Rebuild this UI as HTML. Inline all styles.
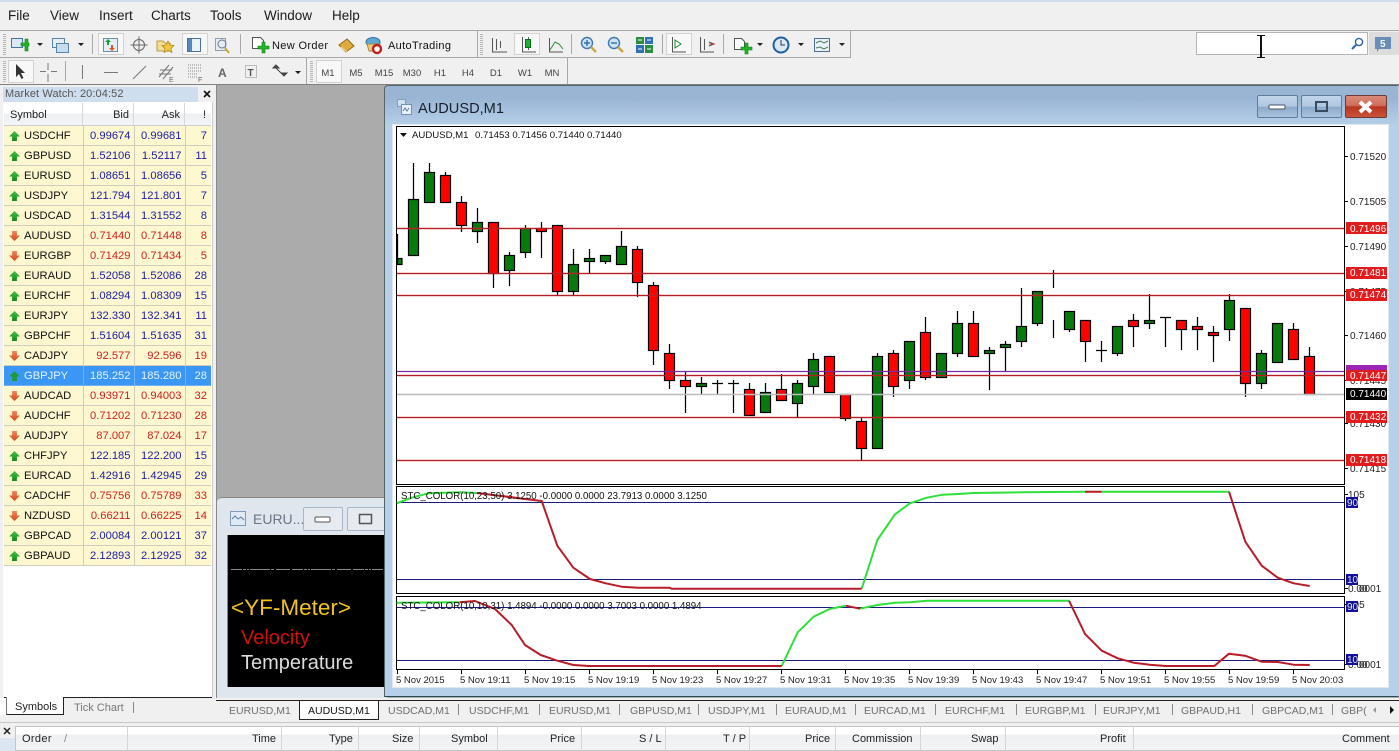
<!DOCTYPE html>
<html><head><meta charset="utf-8"><style>
html,body{margin:0;padding:0;background:#f0f0f0;width:1399px;height:751px;overflow:hidden}
body{position:relative;font-family:"Liberation Sans",sans-serif;font-size:11px;color:#111}
.a{position:absolute}
table{position:absolute;left:4px;top:126px;border-collapse:collapse;table-layout:fixed;width:207px;font-size:11.2px;z-index:2}
td{height:17px;padding:2px 3px 0 0;border:1px solid #cfcdbd;border-top:0;background:#fdf8d0;text-align:right;line-height:17px;white-space:nowrap}
td:first-child{text-align:left;padding-left:20px;position:relative;color:#111;border-left:0}
td:last-child{border-right:0;padding-right:4px}
td:first-child:before{content:"";position:absolute;left:5px;top:5px;width:11px;height:10px;clip-path:polygon(50% 0,100% 55%,72% 55%,72% 100%,28% 100%,28% 55%,0 55%)}
.u td{color:#1c1ca6}.u td:first-child{color:#111}
.u td:first-child:before{background:linear-gradient(#46c146,#0c8a1a)}
.d td{color:#cf2020}.d td:first-child{color:#111}
.d td:first-child:before{background:linear-gradient(#f08a5a,#d8441c);clip-path:polygon(50% 100%,100% 45%,72% 45%,72% 0,28% 0,28% 45%,0 45%)}
.s td,.s td:first-child{background:#3a97f5;color:#e6f2ff;border-color:#6fb2f5}
.s td:first-child:before{background:#1f9a42}
.btn{position:absolute;top:95px;height:23px;width:41px;box-sizing:border-box;border:1px solid #5d7d9f;border-radius:2px;background:linear-gradient(#c2d6ea 0,#aec6df 50%,#8aa9c9 52%,#a9c4de 100%)}
svg{position:absolute;left:0;top:0}
text{font-family:"Liberation Sans",sans-serif}
</style></head><body>
<!-- chrome backgrounds -->
<div class="a" style="left:0;top:0;width:1399px;height:2px;background:#d3deed"></div>
<div class="a" style="left:0;top:30px;width:1399px;height:1px;background:#a8a8a8"></div>
<div class="a" style="left:0;top:57px;width:850px;height:1px;background:#a8a8a8"></div>
<div class="a" style="left:0;top:84px;width:1399px;height:1px;background:#808080"></div>
<div class="a" style="left:850px;top:31px;width:1px;height:27px;background:#a8a8a8"></div>
<div class="a" style="left:567px;top:58px;width:1px;height:26px;background:#a8a8a8"></div>
<div class="a" style="left:306px;top:58px;width:1px;height:26px;background:#a8a8a8"></div>
<div class="a" style="left:477px;top:31px;width:1px;height:26px;background:#a8a8a8"></div>
<!-- search -->
<div class="a" style="left:1196px;top:32px;width:172px;height:23px;box-sizing:border-box;background:#fff;border:1px solid #b4b4b4"></div>
<div class="a" style="left:1369px;top:32px;width:30px;height:23px;background:#dcdcdc"></div>
<!-- left panel -->
<div class="a" style="left:3px;top:87px;width:195px;height:15px;background:#cfdeee"></div>
<div class="a" style="left:3px;top:102px;width:209px;height:595px;background:#fff;border-right:1px solid #cfcfcf"></div>
<div class="a" style="left:4px;top:103px;width:207px;height:22px;background:linear-gradient(#fff 0,#fff 45%,#eef0f3 50%,#f3f4f6 100%);border-bottom:1px solid #cfcfcf"></div>
<div class="a" style="left:82px;top:103px;width:1px;height:22px;background:#d8d8d8"></div>
<div class="a" style="left:133px;top:103px;width:1px;height:22px;background:#d8d8d8"></div>
<div class="a" style="left:184px;top:103px;width:1px;height:22px;background:#d8d8d8"></div>
<table><colgroup><col style="width:79px"><col style="width:51px"><col style="width:51px"><col style="width:26px"></colgroup>
<tr class="u"><td>USDCHF</td><td>0.99674</td><td>0.99681</td><td>7</td></tr>
<tr class="u"><td>GBPUSD</td><td>1.52106</td><td>1.52117</td><td>11</td></tr>
<tr class="u"><td>EURUSD</td><td>1.08651</td><td>1.08656</td><td>5</td></tr>
<tr class="u"><td>USDJPY</td><td>121.794</td><td>121.801</td><td>7</td></tr>
<tr class="u"><td>USDCAD</td><td>1.31544</td><td>1.31552</td><td>8</td></tr>
<tr class="d"><td>AUDUSD</td><td>0.71440</td><td>0.71448</td><td>8</td></tr>
<tr class="d"><td>EURGBP</td><td>0.71429</td><td>0.71434</td><td>5</td></tr>
<tr class="u"><td>EURAUD</td><td>1.52058</td><td>1.52086</td><td>28</td></tr>
<tr class="u"><td>EURCHF</td><td>1.08294</td><td>1.08309</td><td>15</td></tr>
<tr class="u"><td>EURJPY</td><td>132.330</td><td>132.341</td><td>11</td></tr>
<tr class="u"><td>GBPCHF</td><td>1.51604</td><td>1.51635</td><td>31</td></tr>
<tr class="d"><td>CADJPY</td><td>92.577</td><td>92.596</td><td>19</td></tr>
<tr class="s u"><td>GBPJPY</td><td>185.252</td><td>185.280</td><td>28</td></tr>
<tr class="d"><td>AUDCAD</td><td>0.93971</td><td>0.94003</td><td>32</td></tr>
<tr class="d"><td>AUDCHF</td><td>0.71202</td><td>0.71230</td><td>28</td></tr>
<tr class="d"><td>AUDJPY</td><td>87.007</td><td>87.024</td><td>17</td></tr>
<tr class="u"><td>CHFJPY</td><td>122.185</td><td>122.200</td><td>15</td></tr>
<tr class="u"><td>EURCAD</td><td>1.42916</td><td>1.42945</td><td>29</td></tr>
<tr class="d"><td>CADCHF</td><td>0.75756</td><td>0.75789</td><td>33</td></tr>
<tr class="d"><td>NZDUSD</td><td>0.66211</td><td>0.66225</td><td>14</td></tr>
<tr class="u"><td>GBPCAD</td><td>2.00084</td><td>2.00121</td><td>37</td></tr>
<tr class="u"><td>GBPAUD</td><td>2.12893</td><td>2.12925</td><td>32</td></tr>
</table>
<!-- panel tabs -->
<div class="a" style="left:4px;top:697px;width:208px;height:1px;background:#222"></div>
<div class="a" style="left:6px;top:697px;width:58px;height:18px;box-sizing:border-box;background:#fff;border:1px solid #222;border-top:0;border-left-color:#777"></div>
<div class="a" style="left:0;top:698px;width:6px;height:17px;background:#fff"></div>
<div class="a" style="left:64px;top:698px;width:148px;height:19px;background:#f0f0f0"></div>
<!-- MDI -->
<div class="a" style="left:216px;top:85px;width:1183px;height:613px;background:#ababab;border-left:1px solid #888;box-sizing:border-box"></div>
<!-- small window -->
<div class="a" style="left:217px;top:497px;width:170px;height:201px;background:#dfe6ee;border-top:1px solid #888;border-radius:5px 0 0 0;box-sizing:border-box"></div>
<div class="a" style="left:303px;top:507px;width:40px;height:24px;box-sizing:border-box;border:1px solid #a9b6c4;border-radius:2px;background:#e6ebf1"></div>
<div class="a" style="left:347px;top:507px;width:40px;height:24px;box-sizing:border-box;border:1px solid #a9b6c4;border-radius:2px;background:#e6ebf1"></div>
<div class="a" style="left:227px;top:535px;width:157px;height:152px;background:#000;border-left:1px solid #888;box-sizing:border-box"></div>
<!-- main window -->
<div class="a" style="left:384px;top:85px;width:1015px;height:612px;box-sizing:border-box;background:linear-gradient(#9ab5d4 0,#9ab5d4 2%,#b6d0e9 6.5%,#b6d0e9 100%);border:1px solid #566;border-right-color:#b6d0e9;border-bottom:1px solid #2a4a5a;border-radius:4px 0 0 0"></div>
<div class="a" style="left:392px;top:124px;width:997px;height:564px;background:#fff;border:1px solid #dfe8f0;box-sizing:border-box"></div>
<div class="btn" style="left:1257px"></div>
<div class="btn" style="left:1301px"></div>
<div class="btn" style="left:1345px;width:42px;background:linear-gradient(#d98a78 0,#cf6e5c 45%,#b8351f 52%,#c9543c 100%);border-color:#6d3b34"></div>
<!-- doc tabs -->
<div class="a" style="left:216px;top:698px;width:1183px;height:25px;background:#f0f0f0"></div>
<div class="a" style="left:216px;top:700px;width:1183px;height:1px;background:#222"></div>
<div class="a" style="left:299px;top:700px;width:80px;height:20px;box-sizing:border-box;background:#fff;border:1px solid #222"></div>
<!-- bottom terminal -->
<div class="a" style="left:0;top:722px;width:1399px;height:29px;background:#f0f0f0;border-top:1px solid #c8c8c8;box-sizing:border-box"></div>
<div class="a" style="left:15px;top:726px;width:1384px;height:25px;box-sizing:border-box;background:linear-gradient(#fff 0,#fff 30%,#eef0f3 35%,#f3f4f6 100%);border:1px solid #c4c4c4;border-right:0"></div>
<div class="a" style="left:0;top:738px;width:15px;height:13px;background:#dbe6f2"></div>

<svg width="1399" height="751" viewBox="0 0 1399 751">
<!-- menu -->
<g font-size="13.5" fill="#1a1a1a">
<text x="8" y="20">File</text><text x="50" y="20">View</text><text x="99" y="20">Insert</text><text x="151" y="20">Charts</text><text x="210" y="20">Tools</text><text x="264" y="20">Window</text><text x="332" y="20">Help</text>
</g>
<!-- toolbar grips / separators -->
<g stroke="#b5b5b5" fill="none">
<path d="M4.5 34V55M4.5 61V82M311.5 61V82M481.5 34V55" stroke-width="3" stroke-dasharray="1 1"/>
<path d="M92.5 34V54M240.5 34V54M571.5 34V54M662.5 34V54M723.5 34V54M65.5 61V81" stroke="#a8a8a8"/>
</g>
<!-- toggled boxes -->
<g fill="#f8f8f8" stroke="#d2d2d2">
<rect x="98.5" y="33.5" width="25" height="21"/><rect x="182.5" y="33.5" width="25" height="21"/><rect x="514.5" y="33.5" width="25" height="21"/><rect x="666.5" y="33.5" width="25" height="21"/><rect x="8.5" y="60.5" width="25" height="22"/><rect x="316.5" y="60.5" width="25" height="22"/>
</g>
<!-- toolbar 1 icons -->
<rect x="11.5" y="38.5" width="11" height="9" fill="#dce9f5" stroke="#44739e"/><path d="M20 41h4v-4h3v4h1v3h-1v5h-3v-5h-4z" transform="translate(1 2)" fill="#22b52a" stroke="#0c7a12" stroke-width=".6"/>
<path d="M37 43h6l-3 3zM78 43h6l-3 3zM757 43h6l-3 3zM798 43h6l-3 3zM839 43h6l-3 3zM295 71h6l-3 3z" fill="#222"/>
<rect x="52.5" y="38.5" width="12" height="9" fill="#e6eff8" stroke="#5a83a8"/><rect x="56.5" y="43.5" width="12" height="9" fill="#c9dcee" stroke="#5a83a8"/>
<rect x="103.5" y="38.5" width="14" height="13" fill="#e4eef7" stroke="#6b8cab"/><path d="M108 39l3 3h-2v3h-2v-3h-2z" fill="#1f9f2e"/><path d="M112 51l-3-3h2v-3h2v3h2z" fill="#dd5a1c"/>
<circle cx="139" cy="45" r="5.5" fill="none" stroke="#666"/><path d="M139 36.5v17M130.5 45h17" stroke="#666"/>
<path d="M157 41h6l2 2h5v8h-13z" fill="#f3dc93" stroke="#b99b4c"/><path d="M168 41l2 4 4 .5-3 3 1 4-4-2-4 2 1-4-3-3 4-.5z" fill="#f2c83a" stroke="#a88520" stroke-width=".7"/>
<rect x="187.5" y="38.5" width="13" height="13" fill="#eaf2fa" stroke="#4b6f95"/><rect x="188" y="39" width="4" height="12" fill="#5288bd"/>
<rect x="215.5" y="38.5" width="10" height="12" fill="#e4ecf4" stroke="#8aa0b5"/><circle cx="222" cy="44" r="4" fill="none" stroke="#778"/><path d="M225 48l4 5" stroke="#c8a83c" stroke-width="2"/>
<path d="M252.5 37.5h8l3 3v8h-11z" fill="#fff" stroke="#555"/><path d="M258 46h4v-4h3v4h4v3h-4v4h-3v-4h-4z" fill="#22b52a" stroke="#0c7a12" stroke-width=".6"/>
<text x="272" y="49" font-size="11" fill="#111" letter-spacing=".35">New Order</text>
<path d="M339 45l8-6 7 7-8 6z" fill="#e0ab3c" stroke="#8e6a1c"/><path d="M341 47l6 5" stroke="#f6e3a8"/>
<ellipse cx="373" cy="42" rx="7" ry="4.5" fill="#5aa7d8" stroke="#356f99"/><path d="M367 44h13l-2 7h-9z" fill="#e8c978" stroke="#a58a43"/><circle cx="377" cy="49" r="4" fill="#fff" stroke="#c0201a" stroke-width="2.4"/>
<text x="388" y="49" font-size="11" fill="#111" letter-spacing=".35">AutoTrading</text>
<!-- charts group -->
<g stroke="#555" fill="none">
<path d="M492.5 38V52H507M496.5 39V50M500.5 41V48"/>
<path d="M522.5 37V52H536M528.5 37V50"/>
<path d="M549.5 38V52H563"/><path d="M550 50l5-8 4 2 4 5" stroke="#2d8a3a"/>
<path d="M672.5 37V52H686"/><path d="M675 40l6 4-6 4z" stroke="#1a8a2a"/>
<path d="M700.5 37V52H714M704.5 39V50M709 42l5 2-5 2" /><path d="M709 44h6" stroke="#c33"/>
</g>
<rect x="525.5" y="39.5" width="5" height="8" fill="#1fae3a" stroke="#0b6b1e"/>
<circle cx="587" cy="43" r="5.5" fill="#cfe3f7" stroke="#3b78b5" stroke-width="1.4"/><path d="M584 43h6M587 40v6" stroke="#2d6fae" stroke-width="1.4"/><path d="M591 47l5 5" stroke="#c8a83c" stroke-width="2.4"/>
<circle cx="614" cy="43" r="5.5" fill="#cfe3f7" stroke="#3b78b5" stroke-width="1.4"/><path d="M611 43h6" stroke="#2d6fae" stroke-width="1.4"/><path d="M618 47l5 5" stroke="#c8a83c" stroke-width="2.4"/>
<rect x="636" y="37" width="8" height="7" fill="#2b8d42"/><rect x="645" y="37" width="8" height="7" fill="#2e6fb5"/><rect x="636" y="45" width="8" height="8" fill="#2e6fb5"/><rect x="645" y="45" width="8" height="8" fill="#2b8d42"/><path d="M638 40h4M647 40h4M638 49h4M647 49h4" stroke="#fff"/>
<path d="M734.5 38.5h7l3 3v8h-10z" fill="#fff" stroke="#555"/><path d="M741 47h4v-4h3v4h4v3h-4v4h-3v-4h-4z" fill="#22b52a" stroke="#0c7a12" stroke-width=".6"/>
<circle cx="781" cy="45" r="7.5" fill="#dce8f5" stroke="#1d5fa5" stroke-width="2"/><path d="M781 40v5h4" stroke="#335" fill="none"/>
<rect x="814.5" y="38.5" width="15" height="13" fill="#eaf1f8" stroke="#4c6f90"/><path d="M816 43l4-2 4 2 4-2M816 48l4-1 4 2 4-2" stroke="#4e7d5a" fill="none"/>
<!-- search deco + cursor -->
<circle cx="1359" cy="42" r="3.6" fill="#fff" stroke="#2e62a8" stroke-width="1.4"/><path d="M1356 45l-4 4" stroke="#2e62a8" stroke-width="2"/>
<path d="M1375 37h16v12h-12l-2 3v-3h-2z" fill="#6a8cb8"/><text x="1380" y="47" font-size="10" font-weight="bold" fill="#f4f7fb">5</text>
<path d="M1257 35.5h8M1257 57.5h8" stroke="#111"/><path d="M1261 36v21" stroke="#111" stroke-width="2"/>
<!-- toolbar 2 -->
<path d="M16 64v13l3-3 2.5 5 2-1-2.5-5h4z" fill="#333"/>
<path d="M48 63v7M48 74v8M40 71.5h6M51 71.5h6" stroke="#777" fill="none"/>
<path d="M82.5 65v14M104 72.5h14M133 79l13-13" stroke="#777" fill="none"/>
<path d="M159 77l10-12M163 79l10-12M160 70h12M159 74h12" stroke="#777" fill="none"/><text x="169" y="82" font-size="7" fill="#666">E</text>
<path d="M188 65h14M188 68h14M188 71h14M188 74h10M188 77h10" stroke="#888" stroke-dasharray="1 1" fill="none"/><text x="198" y="82" font-size="7" fill="#666">F</text>
<text x="218" y="77" font-size="12" font-weight="bold" fill="#666">A</text>
<rect x="245.5" y="65.5" width="11" height="12" fill="none" stroke="#888" stroke-dasharray="1 1"/><text x="247.5" y="76" font-size="10" font-weight="bold" fill="#555">T</text>
<path d="M273 68l3-3 3 3zM281 73l3 3 3-3zM276 68l5 5" fill="#444" stroke="#444"/>
<g font-size="9.5" fill="#444" text-anchor="middle">
<text x="328" y="76">M1</text><text x="356" y="76">M5</text><text x="384" y="76">M15</text><text x="412" y="76">M30</text><text x="440" y="76">H1</text><text x="468" y="76">H4</text><text x="496" y="76">D1</text><text x="525" y="76">W1</text><text x="552" y="76">MN</text>
</g>
<!-- market watch labels -->
<text x="5" y="97" font-size="11" fill="#555" letter-spacing=".1">Market Watch: 20:04:52</text>
<path d="M204 91l6 6M210 91l-6 6" stroke="#111" stroke-width="1.6"/>
<g font-size="11" fill="#222">
<text x="10" y="118">Symbol</text><text x="129" y="118" text-anchor="end">Bid</text><text x="180" y="118" text-anchor="end">Ask</text><text x="206" y="118" text-anchor="end">!</text>
<text x="15" y="710">Symbols</text><text x="74" y="711" fill="#777">Tick Chart</text>
</g>
<path d="M133.5 702v11" stroke="#888"/>
<!-- small window -->
<rect x="230.5" y="511.5" width="15" height="14" fill="#dfeaf4" stroke="#7f9bb6"/><path d="M232 519l3-3 3 3 3-2 3 3" stroke="#5a7ea2" fill="none"/>
<text x="253" y="524" font-size="14" fill="#6a7683">EURU...</text>
<rect x="315" y="517" width="15" height="5" rx="1" fill="#fff" stroke="#555"/>
<rect x="359.5" y="514.5" width="12" height="9" fill="none" stroke="#555" stroke-width="1.5"/>
<path d="M231 569.5H383" stroke="#888" stroke-dasharray="11 1 3 1 2 1 20 1 3 2 14 2"/>
<text x="231" y="615" font-size="22.5" fill="#f0c21c">&lt;YF-Meter&gt;</text>
<text x="241" y="644" font-size="20" fill="#d01010">Velocity</text>
<text x="241" y="669" font-size="20" fill="#dcdcdc">Temperature</text>
<!-- main title -->
<rect x="397.5" y="99.5" width="8" height="7" fill="#cfe0ef" stroke="#7f9fbd"/><rect x="401.5" y="104.5" width="10" height="10" fill="#e8f1f9" stroke="#6e93b5"/><path d="M403 111l2-3 2 3 2-3" stroke="#5a7ea2" fill="none"/>
<text x="418" y="113" font-size="14.6" fill="#15202c">AUDUSD,M1</text>
<rect x="1269" y="105" width="16" height="4" rx="1" fill="#fff" stroke="#44576b"/>
<rect x="1316" y="102" width="11" height="9" fill="none" stroke="#3b4c60" stroke-width="2"/>
<path d="M1360 102l11 10M1371 102l-11 10" stroke="#fff" stroke-width="4"/>
<!-- chart frames -->
<g fill="#fff" stroke="#000">
<rect x="396.5" y="126.5" width="948" height="358"/>
<rect x="396.5" y="486.5" width="948" height="107"/>
<rect x="396.5" y="596.5" width="948" height="73"/>
</g>
<!-- wicks -->
<path stroke="#000" stroke-width="1.25" fill="none" d="M397.5 234V264M413.5 163V199M429.5 163V172M445.5 172V175M461.5 196V202M461.5 225V232M477.5 208V222M477.5 231V243M493.5 273V288M509.5 252V255M509.5 270V286M525.5 225V228M525.5 252V258M541.5 222V228M541.5 231V258M557.5 291V295M573.5 249V264M573.5 291V295M589.5 249V258M589.5 261V273M605.5 261V264M621.5 231V246M637.5 246V249M637.5 282V297M653.5 282V285M653.5 350V365M669.5 344V353M669.5 380V389M685.5 372V380M685.5 386V413M701.5 377V383M701.5 386V395M717.5 380V395M712 383.500H723M733.5 380V413M728 383.500H739M749.5 383V389M765.5 383V392M781.500 374V389M797.5 380V383M797.5 403V418M813.5 353V359M813.5 386V395M845.5 418V421M861.5 418V421M861.5 448V460M877.5 353V356M893.5 350V353M893.5 386V397M909.5 380V389M925.5 317V332M925.5 377V380M957.5 311V323M957.5 353V357M973.5 311V323M989.5 347V350M989.5 353V390M1005.5 341V344M1005.5 347V371M1021.5 288V326M1021.5 341V347M1037.5 323V326M1053.5 270V288M1053.5 320V338M1069.5 329V332M1085.5 341V362M1101.5 341V362M1096 350.500H1107M1117.5 353V356M1133.5 314V320M1133.5 326V347M1149.5 294V320M1149.5 323V329M1165.5 317V347M1160 317.500H1171M1181.5 329V350M1197.5 317V326M1197.5 329V350M1213.5 326V332M1213.5 335V362M1229.5 294V300M1229.5 329V341M1245.5 383V397M1261.5 350V353M1261.5 383V389M1293.5 323V329M1309.5 347V356"/>
<!-- green bodies -->
<g fill="#07790f" stroke="#000" stroke-width="1.2">
<rect x="397.5" y="258.500" width="4.500" height="6"/><rect x="408.5" y="199.5" width="10" height="56"/><rect x="424.5" y="172.5" width="10" height="30"/><rect x="472.5" y="222.5" width="10" height="9"/><rect x="504.5" y="255.5" width="10" height="15"/><rect x="520.5" y="228.5" width="10" height="24"/><rect x="568.5" y="264.5" width="10" height="27"/><rect x="584.5" y="258.5" width="10" height="3"/><rect x="600.5" y="255.5" width="10" height="6"/><rect x="616.5" y="246.5" width="10" height="18"/><rect x="696.5" y="383.5" width="10" height="3"/><rect x="760.5" y="392.5" width="10" height="20"/><rect x="792.5" y="383.5" width="10" height="20"/><rect x="808.5" y="359.5" width="10" height="27"/><rect x="872.5" y="356.5" width="10" height="92"/><rect x="904.5" y="341.5" width="10" height="39"/><rect x="936.5" y="353.5" width="10" height="24"/><rect x="952.5" y="323.5" width="10" height="30"/><rect x="984.5" y="350.5" width="10" height="3"/><rect x="1000.5" y="344.5" width="10" height="3"/><rect x="1016.5" y="326.5" width="10" height="15"/><rect x="1032.5" y="291.5" width="10" height="32"/><rect x="1064.5" y="311.5" width="10" height="18"/><rect x="1112.5" y="326.5" width="10" height="27"/><rect x="1144.5" y="320.5" width="10" height="3"/><rect x="1224.5" y="300.5" width="10" height="29"/><rect x="1256.5" y="353.5" width="10" height="30"/><rect x="1272.5" y="323.5" width="10" height="39"/>
</g>
<!-- red bodies -->
<g fill="#ff0000" stroke="#000" stroke-width="1.2">
<rect x="440.5" y="175.5" width="10" height="27"/><rect x="456.5" y="202.5" width="10" height="23"/><rect x="488.5" y="222.5" width="10" height="51"/><rect x="536.5" y="228.5" width="10" height="3"/><rect x="552.5" y="225.5" width="10" height="66"/><rect x="632.5" y="249.5" width="10" height="33"/><rect x="648.5" y="285.5" width="10" height="65"/><rect x="664.5" y="353.5" width="10" height="27"/><rect x="680.5" y="380.5" width="10" height="6"/><rect x="744.5" y="389.5" width="10" height="26"/><rect x="776.5" y="389.5" width="10" height="11"/><rect x="824.5" y="356.5" width="10" height="36"/><rect x="840.5" y="394.5" width="10" height="24"/><rect x="856.5" y="421.5" width="10" height="27"/><rect x="888.5" y="353.5" width="10" height="33"/><rect x="920.5" y="332.5" width="10" height="45"/><rect x="968.5" y="323.5" width="10" height="33"/><rect x="1080.5" y="320.5" width="10" height="21"/><rect x="1128.5" y="320.5" width="10" height="6"/><rect x="1176.5" y="320.5" width="10" height="9"/><rect x="1192.5" y="326.5" width="10" height="3"/><rect x="1208.5" y="332.5" width="10" height="3"/><rect x="1240.5" y="308.5" width="10" height="75"/><rect x="1288.5" y="329.5" width="10" height="30"/><rect x="1304.5" y="356.5" width="10" height="38"/>
</g>
<!-- horizontal levels -->
<path d="M397 394.500H1344" stroke="#bcbcbc" stroke-width="1.4"/>
<path d="M397 371.500H1344" stroke="#7a2aa8" stroke-width="1.2"/>
<path d="M397 228.500H1344M397 273.500H1344M397 295.500H1344M397 375.500H1344M397 417.500H1344M397 460.500H1344" stroke="#e03030" stroke-opacity=".22" stroke-width="3"/>
<path d="M397 228.500H1344M397 273.500H1344M397 295.500H1344M397 375.500H1344M397 417.500H1344M397 460.500H1344" stroke="#b02024"/>
<!-- axis -->
<path stroke="#000" d="M1345 156.500h3M1345 201.500h3M1345 246.500h3M1345 291.500h3M1345 335.500h3M1345 380.500h3M1345 423.500h3M1345 468.500h3M1345 494.500h3M1345 588.500h3M1345 604.500h3M1345 664.500h3"/>
<g font-size="10" fill="#222">
<text x="1350" y="160">0.71520</text><text x="1350" y="205">0.71505</text><text x="1350" y="250">0.71490</text><text x="1350" y="295">0.71475</text><text x="1350" y="339">0.71460</text><text x="1350" y="384">0.71445</text><text x="1350" y="427">0.71430</text><text x="1350" y="472">0.71415</text>
</g>
<g>
<rect x="1346" y="222" width="41" height="12" fill="#e21c1c"/><rect x="1346" y="267" width="41" height="12" fill="#e21c1c"/><rect x="1346" y="289" width="41" height="12" fill="#e21c1c"/><rect x="1346" y="365" width="41" height="8" fill="#9b25b5"/><rect x="1346" y="370" width="41" height="11" fill="#e21c1c"/><rect x="1346" y="388" width="41" height="12" fill="#000"/><rect x="1346" y="411" width="41" height="12" fill="#e21c1c"/><rect x="1346" y="454" width="41" height="12" fill="#e21c1c"/>
</g>
<g font-size="10" fill="#fff">
<text x="1350" y="232">0.71496</text><text x="1350" y="276">0.71481</text><text x="1350" y="298">0.71474</text><text x="1350" y="379">0.71447</text><text x="1350" y="397">0.71440</text><text x="1350" y="420">0.71432</text><text x="1350" y="463">0.71418</text>
</g>
<!-- STC lines -->
<g fill="none" stroke-width="2" stroke-linejoin="round">
<path d="M397 502.500H1344M397 579.500H1344M397 607.500H1344M397 660.500H1344" stroke="#1a1a80" stroke-width="1"/>
<path stroke="#2fe03a" d="M396.700 503.300L411.700 497.700 428.300 493.300 460 492.300 476.700 493M861.700 588.700L877.300 540 895 514.300 910 503.300 926.700 497.700 942.700 494.700 958.300 494 973.300 493 1021.700 492.300 1085 491.700M1101.700 491.700L1229 491.700"/>
<path stroke="#b81c28" d="M476.700 493L501.700 496 525 499 541.700 501 557.300 545.700 573.300 567.700 590 579 605.700 583.300 621.700 586.700 637.300 587.700 669.300 587.700 671.700 588.700 861.700 588.700M1085 491.700L1101.700 491.700M1229 491.700L1245.300 541.700 1261.700 565.700 1277.700 577.700 1293.700 583.300 1309.700 586"/>
<path stroke="#2fe03a" d="M396.700 602.700L460 602.300M781.700 666L797.700 632.300 813.700 616.700 829.700 609 845.700 605.700M860 608.700L877.300 605 895 602.700 910 602.300 926.700 600.700 1069 600.700"/>
<path stroke="#b81c28" d="M460 602.300L475 601 495 609 511.700 625 525 645 540.700 655 557.300 660.700 573.300 665 589.300 666 781.700 666M845.700 605.700L860 608.700M1069 600.700L1085 634 1101.700 650.700 1117.700 658.300 1133.700 662.700 1149.700 664.700 1165.700 666 1214.300 666 1229 653.700 1245 655.700 1261.700 661.700 1277.700 662 1293.700 664.700 1309.700 665"/>
</g>
<g font-size="9.7" fill="#111">
<text x="412" y="138" font-size="9.6">AUDUSD,M1</text><text x="475" y="138" font-size="9.6">0.71453 0.71456 0.71440 0.71440</text>
<text x="401" y="499">STC_COLOR(10,23,50) 3.1250 -0.0000 0.0000 23.7913 0.0000 3.1250</text>
<text x="401" y="609">STC_COLOR(10,10,31) 1.4894 -0.0000 0.0000 3.7003 0.0000 1.4894</text>
</g>
<path d="M400 133h7l-3.500 4z" fill="#111"/>
<!-- sub axis -->
<g font-size="10" fill="#222">
<text x="1348" y="498">105</text><text x="1348" y="592">0.00</text><text x="1359" y="592">0001</text><text x="1348" y="608">105</text><text x="1348" y="668">0.00</text><text x="1359" y="668">0001</text>
</g>
<g fill="#10109a"><rect x="1346" y="497" width="12" height="11"/><rect x="1346" y="574" width="12" height="11"/><rect x="1346" y="601" width="12" height="11"/><rect x="1346" y="654" width="12" height="11"/></g>
<g font-size="10" fill="#e8e8ff"><text x="1347" y="506">90</text><text x="1347" y="583">10</text><text x="1347" y="610">90</text><text x="1347" y="663">10</text></g>
<!-- date axis -->
<path stroke="#000" d="M397.500 670v4M461.500 670v4M525.500 670v4M589.500 670v4M653.500 670v4M717.500 670v4M781.500 670v4M845.500 670v4M909.500 670v4M973.500 670v4M1037.500 670v4M1101.500 670v4M1165.500 670v4M1229.500 670v4M1293.500 670v4"/>
<g font-size="9.5" fill="#222">
<text x="396" y="683">5 Nov 2015</text><text x="460" y="683">5 Nov 19:11</text><text x="524" y="683">5 Nov 19:15</text><text x="588" y="683">5 Nov 19:19</text><text x="652" y="683">5 Nov 19:23</text><text x="716" y="683">5 Nov 19:27</text><text x="780" y="683">5 Nov 19:31</text><text x="844" y="683">5 Nov 19:35</text><text x="908" y="683">5 Nov 19:39</text><text x="972" y="683">5 Nov 19:43</text><text x="1036" y="683">5 Nov 19:47</text><text x="1100" y="683">5 Nov 19:51</text><text x="1164" y="683">5 Nov 19:55</text><text x="1228" y="683">5 Nov 19:59</text><text x="1292" y="683">5 Nov 20:03</text>
</g>
<!-- doc tabs -->
<g font-size="10.500" fill="#6e6e6e">
<text x="229" y="714">EURUSD,M1</text><text x="308" y="714" fill="#111">AUDUSD,M1</text><text x="388" y="714">USDCAD,M1</text><text x="469" y="714">USDCHF,M1</text><text x="549" y="714">EURUSD,M1</text><text x="630" y="714">GBPUSD,M1</text><text x="708" y="714">USDJPY,M1</text><text x="785" y="714">EURAUD,M1</text><text x="864" y="714">EURCAD,M1</text><text x="945" y="714">EURCHF,M1</text><text x="1025" y="714">EURGBP,M1</text><text x="1103" y="714">EURJPY,M1</text><text x="1181" y="714">GBPAUD,H1</text><text x="1262" y="714">GBPCAD,M1</text><text x="1341" y="714">GBP(</text>
</g>
<path stroke="#888" d="M458.500 704v11M539.500 704v11M619.500 704v11M698.500 704v11M776.500 704v11M855.500 704v11M935.500 704v11M1016.500 704v11M1095.500 704v11M1172.500 704v11M1252.500 704v11M1332.500 704v11"/>
<path d="M1376 707l-3 3 3 3z" fill="#999"/><path d="M1390 706l4 4-4 4z" fill="#111"/>
<!-- terminal -->
<path d="M4 728l6 6M10 728l-6 6" stroke="#222" stroke-width="1.500"/>
<g font-size="11" fill="#222">
<text x="22" y="742" letter-spacing=".35">Order</text><text x="64" y="742" fill="#888">/</text><text x="252" y="742">Time</text><text x="329" y="742">Type</text><text x="392" y="742">Size</text><text x="451" y="742">Symbol</text><text x="550" y="742">Price</text><text x="639" y="742">S / L</text><text x="723" y="742">T / P</text><text x="805" y="742">Price</text><text x="852" y="742">Commission</text><text x="971" y="742">Swap</text><text x="1100" y="742">Profit</text><text x="1342" y="742">Comment</text>
</g>
<path stroke="#d6d6d6" d="M127.500 727v24M281.500 727v24M358.500 727v24M419.500 727v24M497.500 727v24M581.500 727v24M665.500 727v24M749.500 727v24M835.500 727v24M920.500 727v24M1005.500 727v24M1133.500 727v24"/>
</svg>
</body></html>
